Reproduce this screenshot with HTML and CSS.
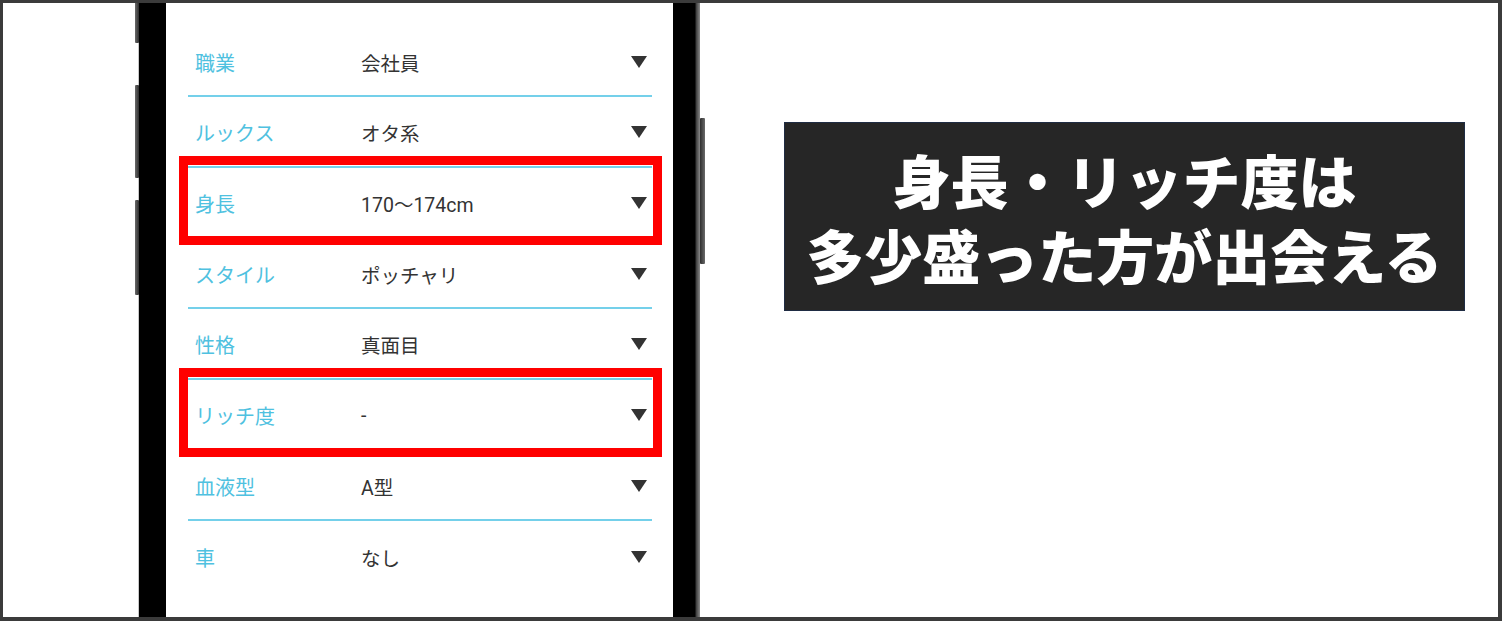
FILE: index.html
```html
<!DOCTYPE html>
<html lang="ja">
<head>
  <meta charset="UTF-8">
  <meta name="viewport" content="width=device-width, initial-scale=1.0">
  <title>プロフィール設定</title>
  <link rel="stylesheet" href="styles.css">
</head>
<body>
  <div class="frame">
    <div class="phone">
      <span class="side-btn btn-l1"></span>
      <span class="side-btn btn-l2"></span>
      <span class="side-btn btn-l3"></span>
      <span class="side-btn btn-r1"></span>
      <div class="screen">
        <div class="row">
          <span class="label">職業</span>
          <span class="value">会社員</span>
          <span class="arrow"></span>
        </div>
        <div class="row">
          <span class="label">ルックス</span>
          <span class="value">オタ系</span>
          <span class="arrow"></span>
        </div>
        <div class="row marked">
          <span class="label">身長</span>
          <span class="value">170〜174cm</span>
          <span class="arrow"></span>
        </div>
        <div class="row">
          <span class="label">スタイル</span>
          <span class="value">ポッチャリ</span>
          <span class="arrow"></span>
        </div>
        <div class="row">
          <span class="label">性格</span>
          <span class="value">真面目</span>
          <span class="arrow"></span>
        </div>
        <div class="row marked">
          <span class="label">リッチ度</span>
          <span class="value">-</span>
          <span class="arrow"></span>
        </div>
        <div class="row">
          <span class="label">血液型</span>
          <span class="value">A型</span>
          <span class="arrow"></span>
        </div>
        <div class="row last">
          <span class="label">車</span>
          <span class="value">なし</span>
          <span class="arrow"></span>
        </div>
      </div>
    </div>

    <div class="caption">
      <p>身長・リッチ度は<br>多少盛った方が出会える</p>
    </div>
  </div>
</body>
</html>
```

FILE: styles.css
```css
html, body {
  margin: 0;
  padding: 0;
}

body {
  width: 1502px;
  height: 621px;
  font-family: Roboto, "Noto Sans CJK JP", sans-serif;
  background-color: #fff;
}

.frame {
  box-sizing: border-box;
  width: 1502px;
  height: 621px;
  border: 3px solid #3b3b3b;
  border-right-width: 4px;
  border-bottom-width: 4px;
  display: flex;
  overflow: hidden;
  background-color: #fff;
}

/* phone body */
.phone {
  position: relative;
  flex: none;
  width: 561px;
  margin-left: 136px;
  display: flex;
  background: linear-gradient(90deg, #000 0, #000 556px, #3a3a3a 557px, #8a8a8a 561px);
  box-shadow: -1px 0 0 #c8c8c8;
}

.side-btn {
  position: absolute;
  width: 4px;
  background: linear-gradient(90deg, #6a6a6a, #2e2e2e);
  border-radius: 1px;
}

.btn-l1 { left: -4px; top: -3px; height: 43px; }
.btn-l2 { left: -4px; top: 82px; height: 93px; }
.btn-l3 { left: -4px; top: 197px; height: 95px; }
.btn-r1 { right: -5px; top: 115px; height: 146px; width: 5px; background: linear-gradient(90deg, #2e2e2e, #6a6a6a); }

.screen {
  box-sizing: border-box;
  width: 507px;
  margin-left: 27px;
  padding: 23.33px 21px 0 22px;
  background-color: #fff;
}

/* select rows */
.row {
  position: relative;
  box-sizing: border-box;
  height: 70.67px;
  padding: 3px 5px 0 7px;
  display: flex;
  align-items: center;
  border-bottom: 2px solid #74d0ea;
}

.row.last {
  border-bottom: none;
}

.row.marked::after {
  content: "";
  position: absolute;
  top: -12px;
  bottom: -9px;
  left: -9px;
  right: -10px;
  border: 9px solid #ff0000;
}

.label {
  width: 166px;
  flex: none;
  font-size: 20px;
  color: #4fc1e0;
}

.value {
  flex: 1;
  font-size: 19.5px;
  color: #333;
}

.arrow {
  width: 0;
  height: 0;
  border-left: 8px solid transparent;
  border-right: 8px solid transparent;
  border-top: 12px solid #333;
  margin-top: -1px;
}

/* caption box */
.caption {
  align-self: flex-start;
  box-sizing: border-box;
  width: 681px;
  height: 189px;
  margin: 119px 0 0 84px;
  border: 1px solid #1f2c43;
  background-color: #262626;
  display: flex;
  align-items: center;
  justify-content: center;
}

.caption p {
  margin: 0;
  font-family: "Noto Sans CJK JP", sans-serif;
  font-weight: 900;
  font-size: 58px;
  line-height: 75px;
  color: #fff;
  text-align: center;
}
```
